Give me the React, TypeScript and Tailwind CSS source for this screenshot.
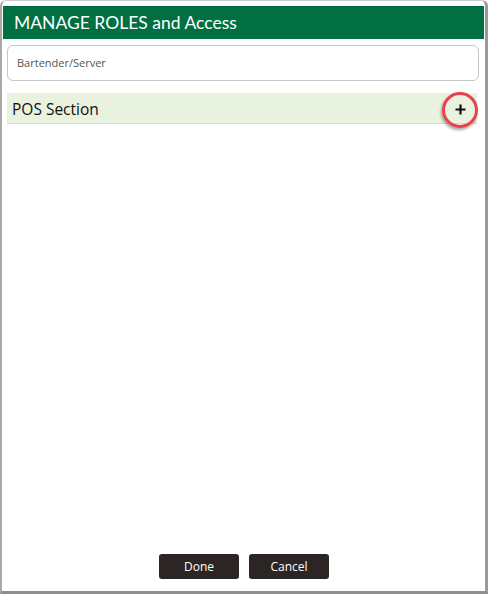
export default function App() {
  return (
    <div className="w-[488px] h-[594px] bg-white overflow-hidden" style={{ fontFamily: '"Open Sans", "Noto Sans", sans-serif' }}>
      <div className="w-[488px] h-[594px] flex flex-col border-t border-l-2 border-r-[3px] border-b-[3px] border-t-[#cfcfcf] border-l-[#a9a9a9] border-r-[#9a9a9a] border-b-[#8f8f8f] rounded-t-[6px] pt-[5px] bg-white">
        <div className="h-[33px] bg-[#006f41] flex items-center pl-[11px] mx-[1px]">
          <span className="text-white text-[17.5px] pt-[2px]" style={{ fontFamily: 'Lato, "Open Sans", sans-serif' }}>MANAGE ROLES and Access</span>
        </div>
        <div className="px-[5px] pt-[6px] flex flex-col flex-1">
          <div className="h-[36px] border border-[#c8c8c8] rounded-[6px] flex items-center pl-[9px] mr-[1px]">
            <span className="text-[11px] text-[#555555] pt-[1px]">Bartender/Server</span>
          </div>
          <div className="mt-[12px] h-[31px] bg-[#e9f2df] border-b border-[#d7dcd3] flex items-center justify-between pl-[5px] pr-[6px] mr-[3px]">
            <span className="text-[15.5px] text-[#111111] pt-[3px]">POS Section</span>
            <div className="relative top-[1.5px] w-[22px] h-[22px] flex items-center justify-center">
              <div className="absolute -inset-[7px] rounded-full border-[3px] border-[#e8434a] shadow-[-1px_2px_3px_rgba(0,0,0,0.35)]"></div>
              <svg width="11" height="11" viewBox="0 0 11 11"><path d="M5.5 0.5v10M0.5 5.5h10" stroke="#111" strokeWidth="2.2" /></svg>
            </div>
          </div>
          <div className="flex-1"></div>
          <div className="flex justify-center gap-[10px] pb-[12px] pl-[1px]">
            <button className="w-[80px] h-[25px] bg-[#2b2624] text-white text-[12px] rounded-[3px]">Done</button>
            <button className="w-[80px] h-[25px] bg-[#2b2624] text-white text-[12px] rounded-[3px]">Cancel</button>
          </div>
        </div>
      </div>
    </div>
  );
}
